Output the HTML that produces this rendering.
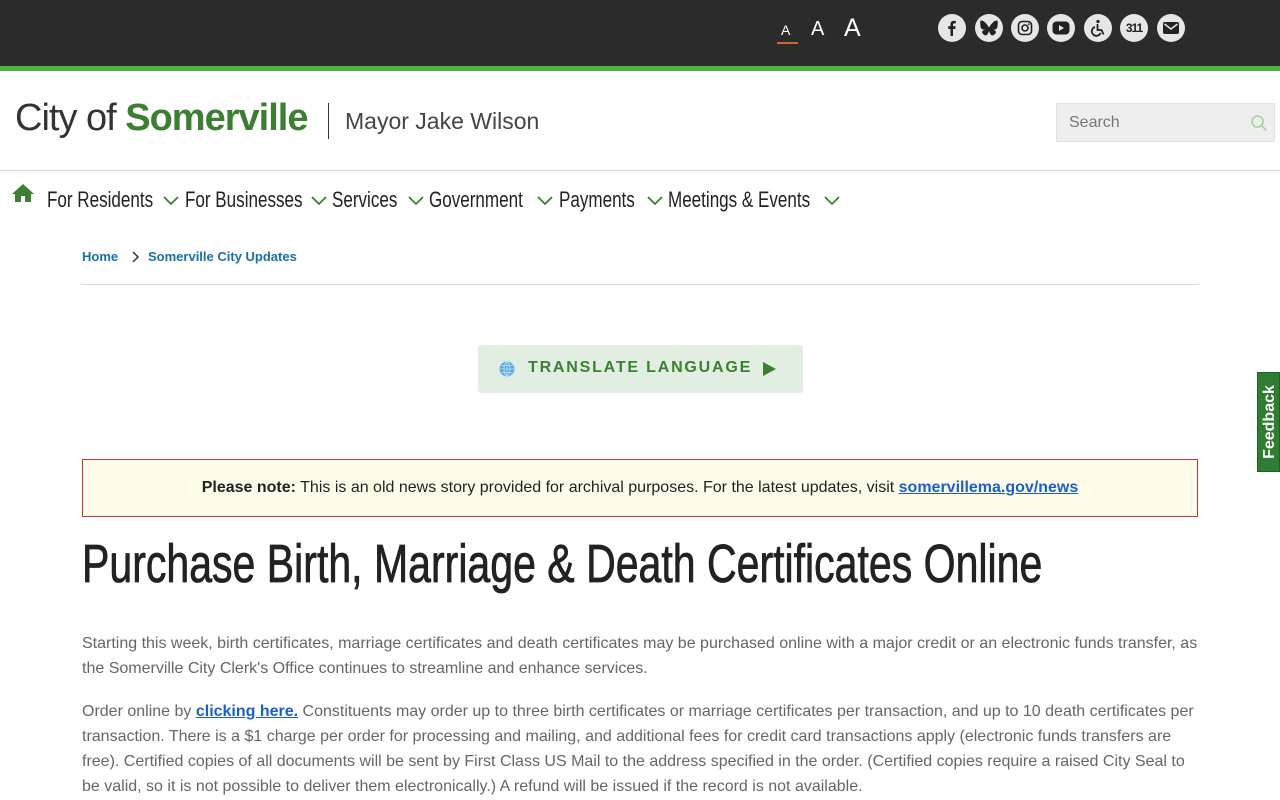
<!DOCTYPE html>
<html><head><meta charset="utf-8"><style>
*{margin:0;padding:0;box-sizing:border-box}
body{width:1280px;height:800px;overflow:hidden;background:#fff;font-family:"Liberation Sans",sans-serif;position:relative}
.top{height:66px;background:#2b2b2b;position:relative}
.green{height:5px;background:#4caf3f}
.fa{position:absolute;color:#fff;font-family:"Liberation Sans",sans-serif}
.ic{position:absolute;top:14px;width:28px;height:28px;border-radius:50%;background:#e6e6e6;display:flex;align-items:center;justify-content:center}
.hdr{height:100px;position:relative;border-bottom:1px solid #d8d8d8}
.nav{position:absolute;top:187px;left:0;font-size:22px;color:#222}
.nav span{position:absolute;top:0;white-space:nowrap;transform:scaleX(0.775);transform-origin:0 0}
p.b{position:absolute;left:82px;width:1116px;font-size:16px;line-height:25px;color:#666}
a{color:#1a5fc8;font-weight:bold}
</style></head><body>
<div class="top">
<div class="fa" style="left:781px;top:22px;font-size:14px">A</div>
<div style="position:absolute;left:777px;top:42px;width:21px;height:2px;background:#d0672e"></div>
<div class="fa" style="left:811px;top:18px;font-size:20px">A</div>
<div class="fa" style="left:844px;top:14px;font-size:25px">A</div>
<div class="ic" style="left:938px"><svg width="16" height="16" viewBox="0 0 16 16"><path d="M9 16V9h2.3l.4-2.7H9V4.7c0-.8.3-1.3 1.4-1.3h1.4V1c-.3 0-1.1-.1-2-.1-2 0-3.3 1.2-3.3 3.4v2H4.2V9h2.3v7z" fill="#222"/></svg></div>
<div class="ic" style="left:975px"><svg width="18" height="16" viewBox="0 0 18 16"><path d="M4 1.5c2 1.5 4 4.3 5 6 1-1.7 3-4.5 5-6 1.5-1 3.8-1.9 3.8.8 0 .5-.3 4.3-.5 4.9-.6 2.2-2.8 2.7-4.8 2.4 3.4.6 4.3 2.5 2.4 4.4-3.6 3.7-5.1-.9-5.5-2.1L9 11.2l-.4.7c-.4 1.2-1.9 5.8-5.5 2.1-1.900-1.9-1-3.8 2.4-4.4-2 .3-4.2-.2-4.8-2.4C.5 6.6.2 2.8.2 2.3.2-.4 2.5.5 4 1.5z" fill="#222"/></svg></div>
<div class="ic" style="left:1011px"><svg width="16" height="16" viewBox="0 0 16 16"><rect x="1.5" y="1.5" width="13" height="13" rx="3.5" fill="none" stroke="#222" stroke-width="1.6"/><circle cx="8" cy="8" r="3" fill="none" stroke="#222" stroke-width="1.6"/><circle cx="11.8" cy="4.2" r=".9" fill="#222"/></svg></div>
<div class="ic" style="left:1047px"><svg width="18" height="14" viewBox="0 0 18 14"><rect x="0.5" y="0.5" width="17" height="13" rx="4" fill="#222"/><path d="M7 4v6l5-3z" fill="#e6e6e6"/></svg></div>
<div class="ic" style="left:1084px"><svg width="18" height="18" viewBox="0 0 18 18"><circle cx="9" cy="2.5" r="1.6" fill="#222"/><path d="M8.5 5v6h4l2 4.5M6 8a4.5 4.5 0 1 0 5.5 6" fill="none" stroke="#222" stroke-width="1.8"/></svg></div>
<div class="ic" style="left:1120px;font-size:12px;font-weight:bold;color:#222;letter-spacing:-1px">311</div>
<div class="ic" style="left:1157px"><svg width="16" height="12" viewBox="0 0 16 12"><rect width="16" height="12" rx="2" fill="#222"/><path d="M1.5 2l6.5 5 6.5-5" fill="none" stroke="#e6e6e6" stroke-width="1.5"/></svg></div>
</div>
<div class="green"></div>
<div class="hdr">
<div style="position:absolute;left:15px;top:26px;font-size:38px;color:#333;letter-spacing:-1px;white-space:nowrap">City of <b style="color:#3c7f33">Somerville</b></div>
<div style="position:absolute;left:328px;top:32px;width:1px;height:36px;background:#333"></div>
<div style="position:absolute;left:345px;top:37px;font-size:23px;color:#444">Mayor Jake Wilson</div>
<div style="position:absolute;left:1056px;top:32px;width:219px;height:39px;background:#eee;border:1px solid #e3e3e3"><span style="position:absolute;left:12px;top:10px;color:#777;font-size:16px">Search</span>
<svg style="position:absolute;right:6px;top:10px" width="18" height="18" viewBox="0 0 18 18"><circle cx="7.5" cy="7.5" r="5.5" fill="none" stroke="#a9cfa4" stroke-width="1.6"/><path d="M11.5 11.5l5 5" stroke="#a9cfa4" stroke-width="1.6"/></svg></div>
</div>
<svg style="position:absolute;left:11px;top:183px" width="24" height="20" viewBox="0 0 24 20"><path d="M12 1L1 11h3v8h6v-6h4v6h6v-8h3z" fill="#3c7f33"/></svg>
<div class="nav">
<span style="left:47px">For Residents</span>
<span style="left:185px">For Businesses</span>
<span style="left:332px">Services</span>
<span style="left:429px">Government</span>
<span style="left:559px">Payments</span>
<span style="left:668px">Meetings &amp; Events</span>
</div>
<svg style="position:absolute;left:0;top:194px" width="850" height="14"><g fill="none" stroke="#3c7f33" stroke-width="1.8"><path d="M164 3l7 7 7-7"/><path d="M312 3l7 7 7-7"/><path d="M409 3l7 7 7-7"/><path d="M538 3l7 7 7-7"/><path d="M648 3l7 7 7-7"/><path d="M825 3l7 7 7-7"/></g></svg>
<div style="position:absolute;left:82px;top:249px;font-size:13px;font-weight:bold;color:#1a6fa8">Home</div>
<svg style="position:absolute;left:131px;top:251px" width="8" height="12"><path d="M2 1l5 5-5 5" fill="none" stroke="#333" stroke-width="1.5"/></svg>
<div style="position:absolute;left:148px;top:249px;font-size:13px;font-weight:bold;color:#1a6fa8">Somerville City Updates</div>
<div style="position:absolute;left:82px;top:284px;width:1116px;height:1px;background:#d8d8d8"></div>
<div style="position:absolute;left:478px;top:345px;width:325px;height:48px;background:#e3eee2;border-radius:3px">
<svg style="position:absolute;left:21px;top:16px" width="16" height="16" viewBox="0 0 16 16"><circle cx="8" cy="8" r="7.5" fill="#5aa9e6"/><g fill="none" stroke="#bfe0f8" stroke-width=".8"><ellipse cx="8" cy="8" rx="3" ry="7"/><path d="M1 8h14M2 4.5h12M2 11.5h12M8 1v14"/></g></svg>
<span style="position:absolute;left:50px;top:14px;font-size:16px;font-weight:bold;color:#3c7f33;letter-spacing:1.8px;white-space:nowrap">TRANSLATE LANGUAGE</span>
<svg style="position:absolute;left:285px;top:17px" width="13" height="14"><path d="M0 0l13 7-13 7z" fill="#3c7f33"/></svg>
</div>
<div style="position:absolute;left:1257px;top:372px;width:23px;height:100px;background:#2e7d32;border:1px solid #1f5f22"><span style="position:absolute;left:-28px;top:40px;transform:rotate(-90deg);color:#fff;font-weight:bold;font-size:16px;width:80px;text-align:center">Feedback</span></div>
<div style="position:absolute;left:82px;top:459px;width:1116px;height:58px;background:#fffdea;border:1px solid #c0392b;text-align:center;font-size:16px;line-height:56px;color:#222"><b>Please note:</b> This is an old news story provided for archival purposes. For the latest updates, visit <a style="text-decoration:underline">somervillema.gov/news</a></div>
<h1 style="position:absolute;left:82px;top:533px;font-size:54px;font-weight:normal;color:#222;white-space:nowrap;transform:scaleX(0.76);transform-origin:0 0;-webkit-text-stroke:0.8px #222">Purchase Birth, Marriage &amp; Death Certificates Online</h1>
<p class="b" style="top:631px">Starting this week, birth certificates, marriage certificates and death certificates may be purchased online with a major credit or an electronic funds transfer, as the Somerville City Clerk's Office continues to streamline and enhance services.</p>
<p class="b" style="top:699px">Order online by <a style="text-decoration:underline">clicking here.</a> Constituents may order up to three birth certificates or marriage certificates per transaction, and up to 10 death certificates per transaction. There is a $1 charge per order for processing and mailing, and additional fees for credit card transactions apply (electronic funds transfers are free). Certified copies of all documents will be sent by First Class US Mail to the address specified in the order. (Certified copies require a raised City Seal to be valid, so it is not possible to deliver them electronically.) A refund will be issued if the record is not available.</p>
</body></html>
